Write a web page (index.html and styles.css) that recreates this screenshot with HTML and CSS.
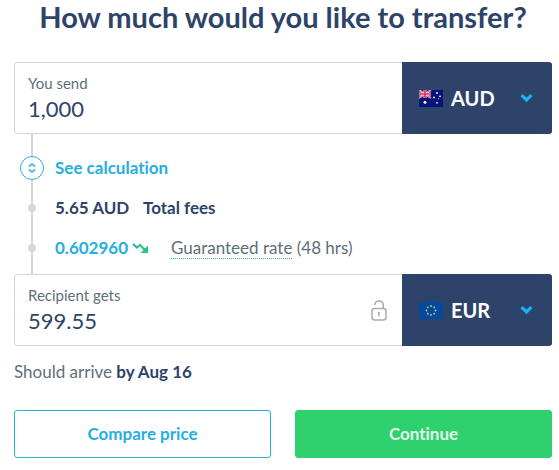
FILE: index.html
```html
<!DOCTYPE html>
<html lang="en">
<head>
<meta charset="utf-8">
<meta name="viewport" content="width=device-width, initial-scale=1">
<title>Transfer</title>
<link rel="stylesheet" href="styles.css">
</head>
<body>
<main class="page">
  <h1 class="title">How much would you like to transfer?</h1>
  <form class="calculator">
    <div class="field">
      <div class="amount">
        <label class="amount-label" for="send">You send</label>
        <input class="amount-input" id="send" type="text" value="1,000">
      </div>
      <div class="currency">
        <svg class="flag" viewBox="0 0 24 17" aria-hidden="true">
          <rect width="24" height="17" fill="#06147a"/>
          <path d="M0 0L12 8M12 0L0 8" stroke="#eec9d9" stroke-width="2"/>
          <path d="M0 0L12 8M12 0L0 8" stroke="#e0405c" stroke-width=".8"/>
          <path d="M6 0V8M0 4H12" stroke="#f5dce6" stroke-width="3"/>
          <path d="M6 0V8M0 4H12" stroke="#e52f4f" stroke-width="1.7"/>
          <g fill="#fff"><circle cx="6" cy="12.3" r="1.5"/><circle cx="18" cy="3" r=".9"/><circle cx="15" cy="7.5" r=".9"/><circle cx="21" cy="6.3" r=".9"/><circle cx="18" cy="12.8" r=".9"/><circle cx="19.6" cy="8.8" r=".5"/></g>
        </svg>
        <select class="currency-select" aria-label="Currency you send"><option>AUD</option><option>EUR</option></select>
        <svg class="chevron" viewBox="0 0 12 9" aria-hidden="true"><path d="M1.500 1.800L6 6.300L10.500 1.800"/></svg>
      </div>
    </div>
    <ul class="steps">
      <li class="step">
        <span class="marker toggle"><svg class="toggle-icon" viewBox="0 0 8 10" aria-hidden="true"><path d="M1 3.600L4 1L7 3.600M1 6.400L4 9L7 6.400"/></svg></span>
        <a class="link" href="#">See calculation</a>
      </li>
      <li class="step fees">
        <span class="marker dot"></span>
        <span class="fee">5.65 AUD</span>
        <span>Total fees</span>
      </li>
      <li class="step">
        <span class="marker dot"></span>
        <span class="rate">0.602960
          <svg class="trend" viewBox="0 0 18 12" aria-hidden="true"><defs><linearGradient id="trend-fill"><stop offset="0" stop-color="#25afd0"/><stop offset=".6" stop-color="#2cc18b"/><stop offset="1" stop-color="#2ec871"/></linearGradient></defs><path d="M1 2L5 5.500L8 3L13 8" fill="none" stroke="url(#trend-fill)" stroke-width="2.200"/><path d="M16 3.500V11H8.500Z" fill="#2ec47c"/></svg>
        </span>
        <span class="note"><a class="hint" href="#">Guaranteed rate</a> (48 hrs)</span>
      </li>
    </ul>
    <div class="field">
      <div class="amount">
        <label class="amount-label" for="receive">Recipient gets</label>
        <input class="amount-input" id="receive" type="text" value="599.55">
      </div>
      <svg class="lock" viewBox="0 0 16 21" aria-hidden="true"><rect x="1" y="8.500" width="14" height="11.500" rx="2.500"/><path d="M3.800 5C3.800 2.500 5.500 1 8 1S12.200 2.600 12.200 5V8.500M8 12V16.500M6.800 12.500H8"/></svg>
      <div class="currency">
        <svg class="flag" viewBox="0 0 24 17" aria-hidden="true">
          <rect width="24" height="17" rx="1" fill="#054a9e"/>
          <g fill="#b5d66c"><circle cx="12" cy="4" r=".9"/><circle cx="15.200" cy="5.300" r=".9"/><circle cx="16.500" cy="8.500" r=".9"/><circle cx="15.200" cy="11.700" r=".9"/><circle cx="12" cy="13" r=".9"/><circle cx="8.800" cy="11.700" r=".9"/><circle cx="7.500" cy="8.500" r=".9"/><circle cx="8.800" cy="5.300" r=".9"/></g>
        </svg>
        <select class="currency-select" aria-label="Currency recipient gets"><option>EUR</option><option>AUD</option></select>
        <svg class="chevron" viewBox="0 0 12 9" aria-hidden="true"><path d="M1.500 1.800L6 6.300L10.500 1.800"/></svg>
      </div>
    </div>
    <p class="arrival">Should arrive <strong class="date">by Aug 16</strong></p>
    <div class="actions">
      <button class="button outline" type="button">Compare price</button>
      <button class="button primary" type="submit">Continue</button>
    </div>
  </form>
</main>
</body>
</html>
```
FILE: styles.css
```css
* { box-sizing: border-box; }

body {
  margin: 0;
  background: #fff;
  color: #5d7079;
  font: 17px/24px Lato, "Open Sans", sans-serif;
  font-variant-ligatures: none;
}

.page { padding: 0 7px 12px 14px; }

.title {
  margin: 0 0 28px;
  color: #2e4369;
  font-size: 29px;
  font-weight: 700;
  line-height: 34px;
  text-align: center;
}

.field {
  display: flex;
  align-items: center;
  height: 72px;
  border: 1px solid #d3d5d8;
  border-radius: 3px;
}

.amount {
  display: flex;
  flex: 1;
  flex-direction: column;
  min-width: 0;
  padding-left: 13px;
}

.amount-label {
  font-size: 15px;
  line-height: 20px;
}

.amount-input {
  width: 100%;
  height: 30px;
  padding: 0;
  border: 0;
  outline: 0;
  background: none;
  color: #2e4369;
  font: inherit;
  font-size: 22px;
}

.lock {
  width: 16px;
  height: 21px;
  margin-right: 16px;
  fill: none;
  stroke: #a8aaac;
  stroke-width: 1.5;
}

.currency {
  display: flex;
  flex: 0 0 150px;
  align-items: center;
  align-self: stretch;
  gap: 8px;
  margin: -1px;
  padding: 0 19px 0 17px;
  border-radius: 0 3px 3px 0;
  background: #2e4369;
}

.flag {
  width: 24px;
  height: 17px;
}

.currency-select {
  flex: 1;
  min-width: 0;
  height: 48px;
  padding: 0;
  border: 0;
  outline: 0;
  appearance: none;
  background: transparent;
  color: #fff;
  font: inherit;
  font-size: 20px;
  font-weight: 700;
}

.chevron {
  flex: none;
  width: 13px;
  height: 10px;
  fill: none;
  stroke: #1cb0f6;
  stroke-width: 3;
}

.steps {
  position: relative;
  margin: 0;
  padding: 14px 0 6px 6px;
  list-style: none;
}

.steps::before {
  position: absolute;
  top: 0;
  bottom: 0;
  left: 17px;
  width: 2px;
  background: #d5d6d8;
  content: "";
}

.step {
  display: flex;
  align-items: center;
  height: 40px;
}

.marker {
  position: relative;
  flex: none;
}

.toggle {
  display: grid;
  place-items: center;
  width: 24px;
  height: 24px;
  margin-right: 11px;
  border: 1px solid #2bb0dc;
  border-radius: 50%;
  background: #fff;
}

.toggle-icon {
  width: 8px;
  height: 10px;
  fill: none;
  stroke: #2bb0dc;
  stroke-width: 1.5;
}

.dot {
  width: 8px;
  height: 8px;
  margin: 0 19px 0 8px;
  border-radius: 50%;
  background: #d5d6d8;
}

.link,
.rate {
  color: #27aee1;
  font-weight: 700;
  text-decoration: none;
}

.fees {
  color: #2e4369;
  font-weight: 700;
}

.fee { width: 88px; }

.rate {
  display: flex;
  align-items: center;
  gap: 4px;
  width: 116px;
}

.trend {
  width: 18px;
  height: 12px;
}

.hint {
  border-bottom: 1px dotted #27aee1;
  color: inherit;
  text-decoration: none;
}

.arrival { margin: 14px 0 26px; }

.date { color: #2e4369; }

.actions {
  display: grid;
  grid-template-columns: 1fr 1fr;
  gap: 24px;
}

.button {
  height: 48px;
  border: 1px solid #2bb0dc;
  border-radius: 3px;
  background: #fff;
  color: #27aee1;
  font: inherit;
  font-weight: 700;
}

.primary {
  border-color: #2fd06e;
  background: #2fd06e;
  color: #e3faeb;
}
```
